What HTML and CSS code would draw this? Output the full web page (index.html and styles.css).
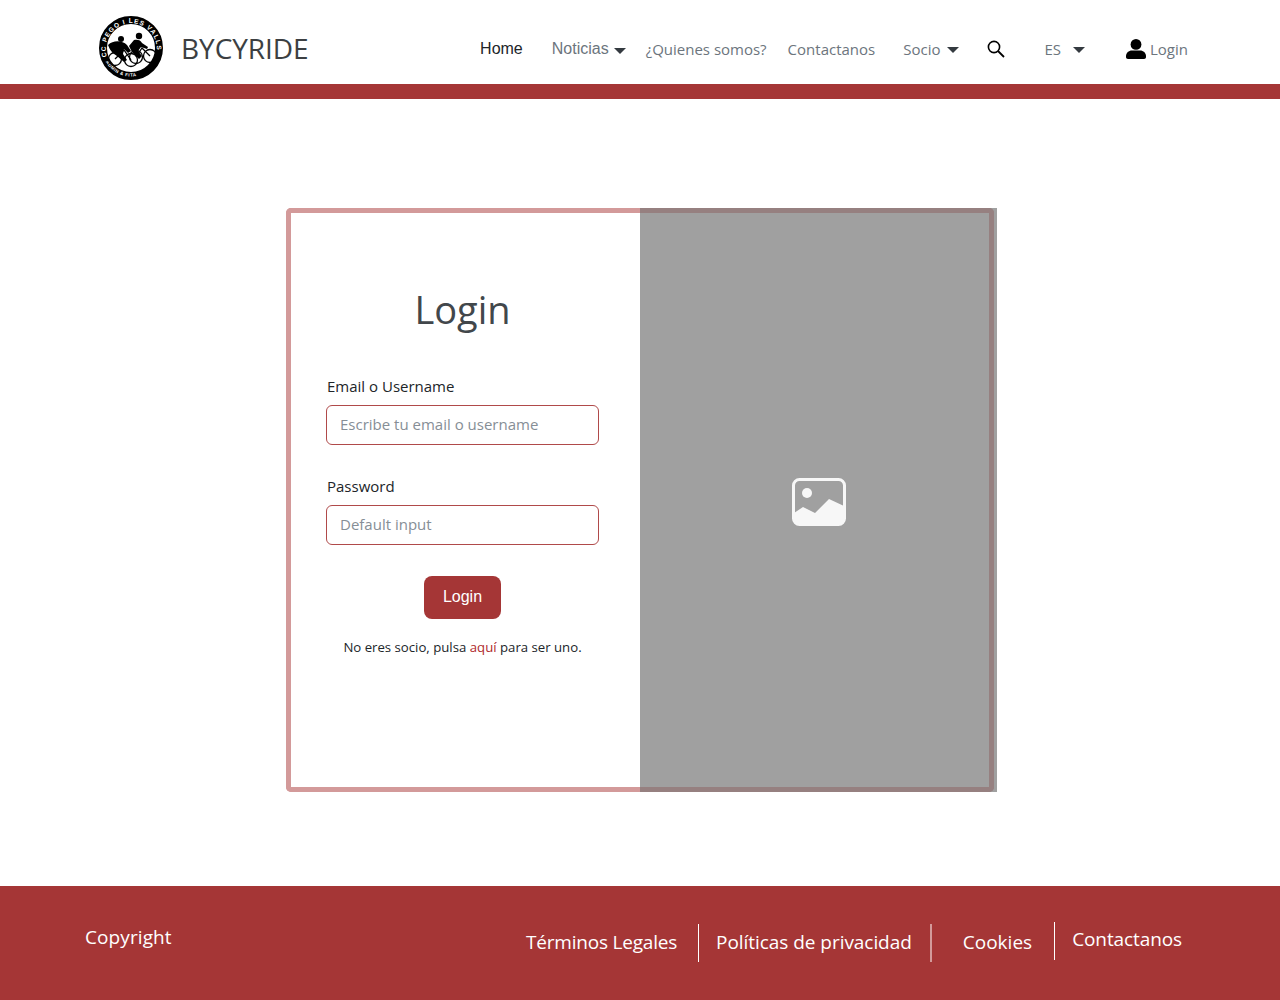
FILE: index.html
```html
<!DOCTYPE html>
<html lang="es">
<head>
    <meta charset="UTF-8">
    <meta name="viewport" content="width=device-width, initial-scale=1.0">
    <title>Bycyride - Login</title>
    <link rel="stylesheet" href="styles.css">
</head>
<body>

    <header class="topbar">
        <a class="brand" href="#">
            <!-- Club badge -->
            <svg class="brand-badge" width="66" height="66" viewBox="0 0 66 66">
                <defs>
                    <path id="badge-arc-top" d="M9 41.7 A25.5 25.5 0 1 1 57.5 41.7"></path>
                    <path id="badge-arc-bottom" d="M6.5 44 A28.5 28.5 0 0 0 38 61"></path>
                </defs>
                <circle cx="33" cy="33" r="28" fill="#fff" stroke="#000" stroke-width="8"></circle>
                <text class="badge-text"><textPath href="#badge-arc-top">CC PEGO I LES VALLS</textPath></text>
                <text class="badge-text-small"><textPath href="#badge-arc-bottom" startOffset="3">ADMIN &amp; FITA</textPath></text>
                <!-- rear rider -->
                <circle cx="23" cy="24" r="3" fill="#000"></circle>
                <path d="M10 30 C15 25 24 25 29 30 L33 36 L30 38 L26 34 L25 39 L29 45 L26 47 L19 41 C14 38 12 35 10 30 Z" fill="#000"></path>
                <!-- front rider -->
                <circle cx="41" cy="21" r="3.2" fill="#000"></circle>
                <path d="M31 31 L36 25 C39 24 43 25 44 28 L50 32 L49 34 L43 32 L40 36 L44 41 L41 44 L34 37 Z" fill="#000"></path>
                <!-- wheels -->
                <g fill="none" stroke="#000" stroke-width="1.3">
                    <circle cx="17" cy="44" r="6.5"></circle>
                    <circle cx="33" cy="45" r="6.5"></circle>
                    <circle cx="38" cy="42" r="6.5"></circle>
                    <circle cx="52" cy="41" r="6.5"></circle>
                    <path d="M17 44 L26 35 L33 45 M38 42 L44 33 L52 41"></path>
                </g>
            </svg>
            <span class="brand-name">BYCYRIDE</span>
        </a>

        <nav class="menu">
            <a class="menu-home" href="#">Home</a>
            <a class="menu-news" href="#">Noticias<span class="caret"></span></a>
            <a class="menu-about" href="#">¿Quienes somos?</a>
            <a class="menu-contact" href="#">Contactanos</a>
            <a class="menu-member" href="#">Socio<span class="caret"></span></a>
            <a class="menu-search" href="#" aria-label="Buscar">
                <svg width="18" height="18" viewBox="0 0 18 18">
                    <circle cx="7" cy="7" r="5.6" fill="none" stroke="#000" stroke-width="1.6"></circle>
                    <path d="M11 11 L17 17" stroke="#000" stroke-width="1.8" fill="none"></path>
                </svg>
            </a>
            <a class="menu-lang" href="#">ES<span class="caret"></span></a>
            <a class="menu-login" href="#">
                <svg width="20" height="20" viewBox="0 0 20 20">
                    <circle cx="10" cy="5.4" r="5.4" fill="#000"></circle>
                    <path d="M6 11.6 H14 C17.4 11.6 20 14 20 17.2 V18 C20 19.2 19.2 20 18 20 H2 C0.8 20 0 19.2 0 18 V17.2 C0 14 2.6 11.6 6 11.6 Z" fill="#000"></path>
                </svg>
                Login
            </a>
        </nav>
    </header>
    <div class="topbar-line"></div>

    <main class="content">
        <section class="login-card">
            <form class="login-form">
                <h1 class="login-title">Login</h1>

                <label class="field-label" for="user">Email o Username</label>
                <input class="field-input" type="text" id="user" placeholder="Escribe tu email o username">

                <label class="field-label field-label-second" for="pass">Password</label>
                <input class="field-input" type="text" id="pass" placeholder="Default input">

                <button class="login-button" type="button">Login</button>
                <p class="login-note">No eres socio, pulsa <a href="#">aquí</a> para ser uno.</p>
            </form>

            <div class="login-image">
                <div class="login-image-frame">
                    <svg width="54" height="48" viewBox="0 0 54 48">
                        <rect x="1.5" y="1.5" width="51" height="45" rx="6" fill="none" stroke="#f7f7f7" stroke-width="3"></rect>
                        <circle cx="15" cy="15" r="5" fill="#f7f7f7"></circle>
                        <path d="M2 35 L11 29 L23 35 L37 21 L52 28 V41 A6 6 0 0 1 46 47 H8 A6 6 0 0 1 2 41 Z" fill="#f7f7f7"></path>
                    </svg>
                </div>
            </div>
        </section>
    </main>

    <footer class="footer">
        <div class="footer-copy">Copyright</div>
        <nav class="footer-links">
            <a class="footer-terms" href="#">Términos Legales</a>
            <a class="footer-privacy" href="#">Políticas de privacidad</a>
            <a class="footer-cookies" href="#">Cookies</a>
            <a class="footer-contact" href="#">Contactanos</a>
        </nav>
    </footer>

</body>
</html>
```

FILE: styles.css
```css
body {
    margin: 0;
    font-family: "Open Sans", sans-serif;
    color: #212529;
    background-color: #fff;
}

a {
    text-decoration: none;
    color: inherit;
}

/* Header */
.topbar {
    box-sizing: border-box;
    height: 84px;
    display: flex;
    align-items: center;
    justify-content: space-between;
    padding: 14px 92px 0 98px;
}

.brand {
    display: flex;
    align-items: center;
    margin-top: -10px;
}

.brand-badge {
    display: block;
    margin-top: 8px;
}

.badge-text {
    font-family: "Liberation Sans", sans-serif;
    font-size: 6.5px;
    font-weight: bold;
    letter-spacing: 1px;
    fill: #fff;
}

.badge-text-small {
    font-family: "Liberation Sans", sans-serif;
    font-size: 4.5px;
    font-weight: bold;
    letter-spacing: 0.5px;
    fill: #fff;
}

.brand-name {
    margin-left: 17px;
    margin-top: 8px;
    font-size: 28px;
    letter-spacing: -0.05px;
    color: #3c3f42;
}

.menu {
    display: flex;
    align-items: center;
    font-size: 15px;
    color: #6c757d;
}

.menu-home,
.menu-news {
    font-family: "Liberation Sans", sans-serif;
    font-size: 16px;
}

.menu-home {
    color: #212529;
}

.menu-news {
    margin-left: 29px;
}

.menu-about {
    margin-left: 20px;
}

.menu-contact {
    margin-left: 21px;
}

.menu-member {
    margin-left: 28px;
}

.menu-search {
    margin-left: 28px;
    display: flex;
}

.menu-lang {
    margin-left: 39px;
}

.menu-login {
    margin-left: 41px;
    display: flex;
    align-items: center;
    gap: 4px;
}

.caret {
    display: inline-block;
    margin-left: 5px;
    vertical-align: 0;
    border-top: 6px solid #343a40;
    border-left: 6px solid transparent;
    border-right: 6px solid transparent;
}

.menu-member .caret {
    margin-left: 7px;
    vertical-align: 2px;
}

.menu-lang .caret {
    margin-left: 12px;
    vertical-align: 2px;
}

.topbar-line {
    height: 15px;
    background-color: #a53636;
}

/* Login card */
.content {
    padding: 109px 0 94px 286px;
}

.login-card {
    box-sizing: border-box;
    width: 711px;
    height: 584px;
    display: flex;
    border: 5px solid #d39a9a;
    border-right: 0;
    border-radius: 5px 0 0 5px;
}

.login-form {
    box-sizing: border-box;
    width: 349px;
    padding: 70px 41px 0 35px;
    display: flex;
    flex-direction: column;
}

.login-title {
    margin: 0 0 40px;
    font-size: 38px;
    font-weight: normal;
    line-height: 52px;
    text-align: center;
    color: #42474b;
}

.field-label {
    margin-left: 1px;
    margin-bottom: 8px;
    font-size: 15px;
    line-height: 22px;
    color: #212529;
}

.field-label-second {
    margin-top: 30px;
}

.field-input {
    box-sizing: border-box;
    width: 273px;
    height: 40px;
    padding: 0 13px 3px;
    border: 1px solid #b04a4a;
    border-radius: 6px;
    font-family: "Open Sans", sans-serif;
    font-size: 15px;
    color: #212529;
    background-color: #fff;
}

.field-input::placeholder {
    color: #868e96;
    opacity: 1;
}

.login-button {
    align-self: center;
    width: 77px;
    height: 43px;
    margin-top: 31px;
    padding: 0 0 2px;
    border: 0;
    border-radius: 8px;
    font-family: "Liberation Sans", sans-serif;
    font-size: 16px;
    color: #fff;
    background-color: #a53636;
}

.login-note {
    margin: 18px 0 0;
    font-size: 13.2px;
    line-height: 20px;
    text-align: center;
    color: #212529;
}

.login-note a {
    color: #b02a2a;
}

/* Grey panel sits over the card border */
.login-image {
    flex: 1;
    margin: -5px 0;
    padding-right: 3px;
    background-color: #a0a0a0;
}

.login-image-frame {
    box-sizing: border-box;
    height: 100%;
    display: flex;
    align-items: center;
    justify-content: center;
    padding-top: 4px;
    padding-left: 9px;
    border: 5px solid #968080;
    border-left: 0;
    border-radius: 0 5px 5px 0;
}

/* Footer */
.footer {
    box-sizing: border-box;
    height: 114px;
    display: flex;
    justify-content: space-between;
    padding: 0 98px 0 85px;
    font-size: 19px;
    color: #fff;
    background-color: #a53636;
}

.footer-copy {
    margin-top: 37px;
    line-height: 28px;
    letter-spacing: 0.1px;
}

.footer-links {
    display: flex;
    align-items: flex-start;
    line-height: 28px;
}

.footer-links a {
    box-sizing: border-box;
    height: 38px;
    display: block;
}

.footer-terms {
    margin-top: 38px;
    padding: 4px 21px 0 0;
    border-right: 1px solid #fff;
    letter-spacing: -0.2px;
}

.footer-privacy {
    margin-top: 38px;
    padding: 4px 18px 0 17px;
    border-right: 2px solid #d39a9a;
    letter-spacing: -0.05px;
}

.footer-cookies {
    margin-top: 36px;
    padding: 6px 22px 0 31px;
    border-right: 1px solid #fff;
}

.footer-contact {
    margin-top: 39px;
    padding-left: 17px;
    letter-spacing: -0.1px;
}
```
